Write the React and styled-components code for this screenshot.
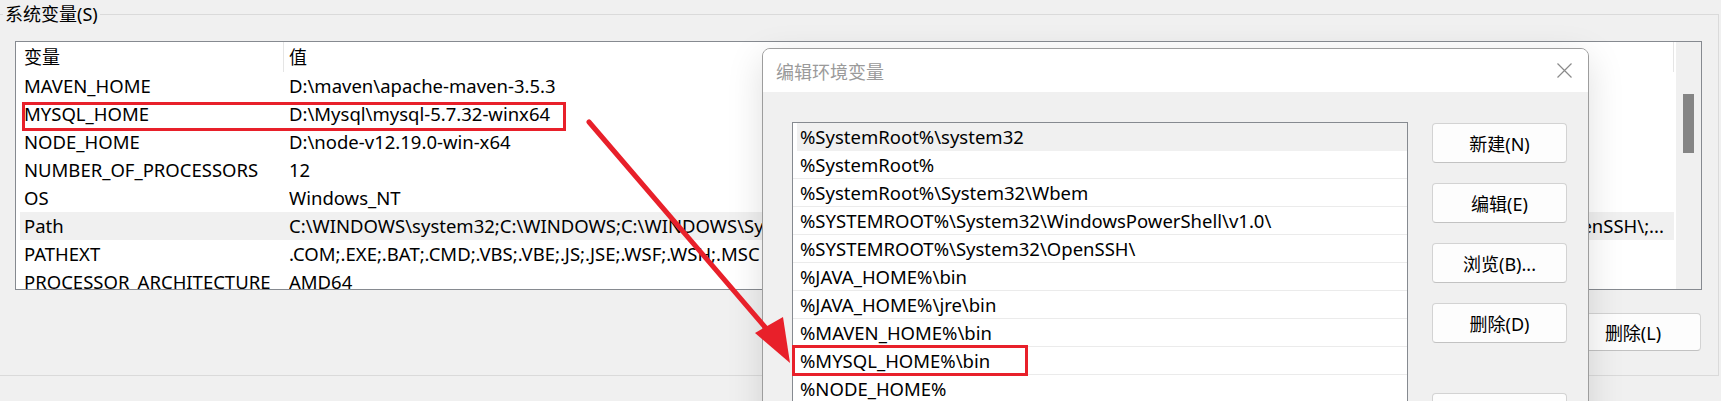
import React from 'react';
import styled, { createGlobalStyle } from 'styled-components';

const GlobalStyle = createGlobalStyle`
  html, body {
    margin: 0;
    padding: 0;
    background: #f0f0f0;
  }
  body {
    font-family: "Noto Sans", "Noto Sans CJK SC", sans-serif;
    font-size: 18.5px;
    color: #000;
  }
`;

const Page = styled.div`
  position: relative;
  width: 1721px;
  height: 401px;
  overflow: hidden;
  background: #f0f0f0;
`;

const GroupBox = styled.fieldset`
  box-sizing: border-box;
  margin: 0;
  min-width: 0;
  width: 1719px;
  height: 376px;
  padding: 13px 16px 0 15px;
  border: 1px solid #dadada;
  border-left: 0;
`;

const Legend = styled.legend`
  margin-left: -12px;
  padding: 0 2px;
  line-height: 28px;
  font-size: 18px;
`;

const ListView = styled.div`
  display: flex;
  box-sizing: border-box;
  height: 249px;
  border: 1px solid #868a90;
  background: #fff;
  overflow: hidden;
`;

const Table = styled.div`
  flex: 1;
  min-width: 0;
  overflow: hidden;
`;

const HeaderRow = styled.div`
  display: grid;
  grid-template-columns: 268px 1fr;
  height: 30px;
  line-height: 30px;
  font-size: 18px;
`;

const HeaderCell = styled.div`
  padding-left: ${({ first }) => (first ? '8px' : '5px')};
  border-right: 1px solid #e5e5e5;
`;

const Row = styled.div`
  display: grid;
  grid-template-columns: 264px 1fr;
  height: 28px;
  line-height: 28px;
  margin-left: 4px;
  background: ${({ selected }) => (selected ? '#f0f0f0' : 'transparent')};
  white-space: nowrap;
`;

const NameCell = styled.div`
  padding-left: 4px;
  overflow: hidden;
`;

const ValueCell = styled.div`
  display: flex;
  min-width: 0;
  padding: 0 10px 0 5px;
  overflow: hidden;
`;

const ValueHead = styled.span`
  flex: 1;
  min-width: 0;
  overflow: hidden;
`;

const ValueTail = styled.span`
  flex: none;
`;

const ScrollTrack = styled.div`
  flex: none;
  width: 25px;
  margin-left: 2px;
  background: #f0f0f0;
`;

const ScrollThumb = styled.div`
  width: 11px;
  height: 59px;
  margin: 52px auto 0;
  background: #858585;
`;

const ButtonRow = styled.div`
  display: flex;
  justify-content: flex-end;
  gap: 20px;
  margin-top: 23px;
  padding-right: 1px;
`;

const Button = styled.button`
  box-sizing: border-box;
  width: ${({ wide }) => (wide ? '136px' : '135px')};
  height: ${({ tall }) => (tall ? '40px' : '38px')};
  padding: 0;
  border: 1px solid #d3d3d3;
  border-bottom-color: #c2c2c2;
  border-radius: 4px;
  background: #fdfdfd;
  font-family: inherit;
  font-size: 18px;
  color: #000;
`;

const Dialog = styled.section`
  position: absolute;
  left: 762px;
  top: 48px;
  box-sizing: border-box;
  width: 827px;
  height: 420px;
  border: 1px solid #9d9d9d;
  border-radius: 8px 8px 0 0;
  background: #f0f0f0;
  box-shadow: 0 10px 36px rgba(0, 0, 0, 0.13);
  overflow: hidden;
`;

const TitleBar = styled.div`
  display: flex;
  align-items: center;
  justify-content: space-between;
  height: 43px;
  padding: 0 16px 0 13px;
  background: #fff;
`;

const Title = styled.span`
  font-size: 18px;
  color: #9a9a9a;
`;

const DialogBody = styled.div`
  display: flex;
  align-items: flex-start;
  gap: 24px;
  padding: 30px 0 0 29px;
`;

const PathList = styled.div`
  box-sizing: border-box;
  width: 616px;
  height: 400px;
  border: 1px solid #868a90;
  background: #fff;
`;

const PathRow = styled.div`
  box-sizing: border-box;
  height: 28px;
  line-height: 27px;
  padding-left: ${({ selected }) => (selected ? '3px' : '7px')};
  margin-left: ${({ selected }) => (selected ? '4px' : '0')};
  border-bottom: 1px solid ${({ selected }) => (selected ? '#f0f0f0' : '#ebebeb')};
  background: ${({ selected }) => (selected ? '#f0f0f0' : '#fff')};
  white-space: nowrap;
`;

const ButtonColumn = styled.div`
  display: flex;
  flex-direction: column;
  gap: 20px;
  padding-top: 1px;
`;

const Spacer = styled.div`
  height: 10px;
`;

const Overlay = styled.svg`
  position: absolute;
  left: 0;
  top: 0;
  pointer-events: none;
`;

const variables = [
  ['MAVEN_HOME', 'D:\\maven\\apache-maven-3.5.3'],
  ['MYSQL_HOME', 'D:\\Mysql\\mysql-5.7.32-winx64'],
  ['NODE_HOME', 'D:\\node-v12.19.0-win-x64'],
  ['NUMBER_OF_PROCESSORS', '12'],
  ['OS', 'Windows_NT'],
  ['Path', 'C:\\WINDOWS\\system32;C:\\WINDOWS;C:\\WINDOWS\\System32\\Wbem;C:\\WINDOWS\\System32\\WindowsPowerShell\\v1.0\\;', 'C:\\WINDOWS\\System32\\OpenSSH\\;...'],
  ['PATHEXT', '.COM;.EXE;.BAT;.CMD;.VBS;.VBE;.JS;.JSE;.WSF;.WSH;.MSC'],
  ['PROCESSOR_ARCHITECTURE', 'AMD64'],
];

const paths = [
  '%SystemRoot%\\system32',
  '%SystemRoot%',
  '%SystemRoot%\\System32\\Wbem',
  '%SYSTEMROOT%\\System32\\WindowsPowerShell\\v1.0\\',
  '%SYSTEMROOT%\\System32\\OpenSSH\\',
  '%JAVA_HOME%\\bin',
  '%JAVA_HOME%\\jre\\bin',
  '%MAVEN_HOME%\\bin',
  '%MYSQL_HOME%\\bin',
  '%NODE_HOME%',
];

const CloseIcon = () => (
  <svg width="15" height="15" viewBox="0 0 15 15">
    <path d="M0.5 0.5 L14.5 14.5 M14.5 0.5 L0.5 14.5" stroke="#8a8a8a" strokeWidth="1.2" fill="none" />
  </svg>
);

const App = () => {
  return (
    <Page>
      <GlobalStyle />
      <GroupBox>
        <Legend>系统变量(S)</Legend>
        <ListView>
          <Table>
            <HeaderRow>
              <HeaderCell first>变量</HeaderCell>
              <HeaderCell>值</HeaderCell>
            </HeaderRow>
            {variables.map(([name, value, tail]) => (
              <Row key={name} selected={name === 'Path'}>
                <NameCell>{name}</NameCell>
                <ValueCell>
                  <ValueHead>{value}</ValueHead>
                  {tail && <ValueTail>{tail}</ValueTail>}
                </ValueCell>
              </Row>
            ))}
          </Table>
          <ScrollTrack>
            <ScrollThumb />
          </ScrollTrack>
        </ListView>
        <ButtonRow>
          <Button wide>新建(W)...</Button>
          <Button wide>编辑(I)...</Button>
          <Button wide>删除(L)</Button>
        </ButtonRow>
      </GroupBox>

      <Dialog>
        <TitleBar>
          <Title>编辑环境变量</Title>
          <CloseIcon />
        </TitleBar>
        <DialogBody>
          <PathList>
            {paths.map((p, i) => (
              <PathRow key={p} selected={i === 0}>{p}</PathRow>
            ))}
          </PathList>
          <ButtonColumn>
            <Button tall>新建(N)</Button>
            <Button tall>编辑(E)</Button>
            <Button tall>浏览(B)...</Button>
            <Button tall>删除(D)</Button>
            <Spacer />
            <Button tall>上移(U)</Button>
            <Button tall>下移(O)</Button>
          </ButtonColumn>
        </DialogBody>
      </Dialog>

      <Overlay width="1721" height="401" viewBox="0 0 1721 401">
        <rect x="23.5" y="103.5" width="541" height="26" fill="none" stroke="#e8202a" strokeWidth="3" />
        <rect x="793.5" y="346.5" width="233" height="28" fill="none" stroke="#e8202a" strokeWidth="3" />
        <line x1="589" y1="122" x2="771" y2="334" stroke="#e8202a" strokeWidth="5" strokeLinecap="round" />
        <polygon points="755,333 783,317 790,363" fill="#e8202a" />
      </Overlay>
    </Page>
  );
};

export default App;
